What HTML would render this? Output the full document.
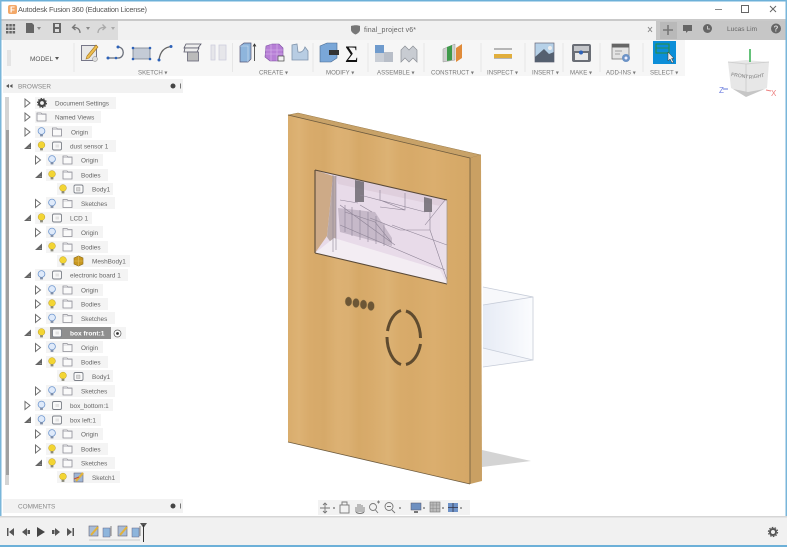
<!DOCTYPE html>
<html><head><meta charset="utf-8"><title>Autodesk Fusion 360</title>
<style>
html,body{margin:0;padding:0;width:787px;height:547px;overflow:hidden;background:#fff}
svg{display:block;font-family:"Liberation Sans",sans-serif;filter:blur(.3px)}
.t{font-size:6.4px;fill:#666}
.l{font-size:6.1px;fill:#7a7a7a}
</style></head><body>
<svg width="787" height="547" viewBox="0 0 787 547" xmlns="http://www.w3.org/2000/svg">
<defs>
<linearGradient id="wood" x1="0" x2="1" y1="0" y2="0">
<stop offset="0" stop-color="#d9ad6d"/><stop offset=".06" stop-color="#ddb274"/><stop offset=".12" stop-color="#d8ab6b"/><stop offset=".2" stop-color="#d6a969"/><stop offset=".27" stop-color="#dcb173"/><stop offset=".33" stop-color="#dbb072"/><stop offset=".39" stop-color="#d6a968"/><stop offset=".45" stop-color="#d8ab6b"/><stop offset=".55" stop-color="#dcb274"/><stop offset=".62" stop-color="#d8ab6a"/><stop offset=".68" stop-color="#d7aa69"/><stop offset=".8" stop-color="#dbae6e"/><stop offset=".9" stop-color="#d7aa69"/><stop offset="1" stop-color="#d5a867"/>
</linearGradient>
<linearGradient id="glass" x1="0" x2="1" y1="0" y2="0"><stop offset="0" stop-color="#e6ebf5"/><stop offset="1" stop-color="#fbfcfe"/></linearGradient>
<symbol id="ar" overflow="visible"><path d="M-2.500-4L2.500 0L-2.500 4Z" fill="#fff" stroke="#6f6f6f" stroke-width="1"/></symbol>
<symbol id="ad" overflow="visible"><path d="M3.500-3.500V3H-3.500Z" fill="#666"/><path d="M1 1.500H3" stroke="#aaa" stroke-width=".6"/></symbol>
<symbol id="by" overflow="visible"><circle cy="-1" r="3.400" fill="#f3d533" stroke="#b89c2a" stroke-width=".5"/><rect x="-1.400" y="2.200" width="2.800" height="2.200" fill="#8a8a7a"/></symbol>
<symbol id="bb" overflow="visible"><circle cy="-1" r="3.400" fill="#dfeafa" stroke="#6f97cf" stroke-width=".8"/><rect x="-1.400" y="2.200" width="2.800" height="2.200" fill="#7f8ea8"/></symbol>
<symbol id="fo" overflow="visible"><path d="M-4.500-4H-.5L.5-3H4.500V4H-4.500Z" fill="#fafafa" stroke="#8c8c94" stroke-width=".8"/><path d="M-4.500-2.500H4.500" stroke="#a8a8b0" stroke-width=".5"/></symbol>
<symbol id="co" overflow="visible"><rect x="-4.500" y="-4" width="9" height="8" rx="1.500" fill="#f8f8f8" stroke="#7c8088" stroke-width=".9"/><rect x="-1.500" y="-1.500" width="3.500" height="3" fill="#e2e2e2"/></symbol>
<symbol id="bd" overflow="visible"><rect x="-4.500" y="-4" width="9" height="8" rx="1.500" fill="#fbfbfb" stroke="#7c8088" stroke-width=".9"/><rect x="-2" y="-1.500" width="3.500" height="3.500" fill="#d6d6d6" stroke="#999" stroke-width=".4"/></symbol>
</defs>

<!-- title bar -->
<rect width="787" height="547" fill="#fff"/>
<rect x="0" y="0" width="787" height="1.500" fill="#6cb0d8"/>
<rect x="8" y="5" width="9" height="9" rx="2" fill="#f3a868"/><text x="10" y="12.500" font-size="8" font-weight="bold" fill="#fff">F</text>
<text x="18" y="12" font-size="7.400" fill="#555" textLength="129">Autodesk Fusion 360 (Education License)</text>
<path d="M715 9.500H722" stroke="#888" stroke-width="1"/>
<rect x="741.500" y="5.500" width="7" height="7" fill="none" stroke="#666" stroke-width="1"/>
<path d="M770 6L776 12M776 6L770 12" stroke="#666" stroke-width="1"/>

<!-- tab row -->
<rect x="0" y="19" width="787" height="2" fill="#c9c9c9"/>
<rect x="0" y="21" width="787" height="19" fill="#f1f1f1"/>
<rect x="0" y="21" width="118" height="19" fill="#dcdcdc"/>
<rect x="656" y="21" width="131" height="19" fill="#c6c6c6"/>
<rect x="660" y="22" width="17" height="17" fill="#b9b9b9"/>
<g fill="#666">
<rect x="6" y="24" width="2.500" height="2.500"/><rect x="9.300" y="24" width="2.500" height="2.500"/><rect x="12.600" y="24" width="2.500" height="2.500"/>
<rect x="6" y="27.500" width="2.500" height="2.500"/><rect x="9.300" y="27.500" width="2.500" height="2.500"/><rect x="12.600" y="27.500" width="2.500" height="2.500"/>
<rect x="6" y="31" width="2.500" height="2.500"/><rect x="9.300" y="31" width="2.500" height="2.500"/><rect x="12.600" y="31" width="2.500" height="2.500"/>
<path d="M26 23H32L34 25V33H26Z"/><path d="M37 27H41L39 30Z" fill="#888"/>
<path d="M53 23H61V33H53Z"/><rect x="55" y="24" width="4" height="3" fill="#ddd"/><rect x="55" y="29" width="4" height="3" fill="#ddd"/>
<path d="M86 27H90L88 30Z" fill="#888"/><path d="M111 27H115L113 30Z" fill="#aaa"/>
</g>
<path d="M80 33C80 29 77 27 73 27.500M75.500 24.500L72.500 27.500L75.500 30" fill="none" stroke="#777" stroke-width="1.300"/>
<path d="M98 33C98 29 101 27 105 27.500M102.500 24.500L105.500 27.500L102.500 30" fill="none" stroke="#aaa" stroke-width="1.300"/>
<path d="M351 26C354 25 358 25 360 26V30C360 32 357 34 355.500 34.500C354 34 351 32 351 30Z" fill="#777"/>
<text x="364" y="32" font-size="7" fill="#666" textLength="52">final_project v6*</text>
<path d="M648 27L652 32M652 27L648 32" stroke="#888" stroke-width="1"/>
<path d="M668 25V35M663 30H673" stroke="#777" stroke-width="1.600"/>
<rect x="683" y="25" width="9" height="6" fill="#666"/><path d="M686 31V33L688 31Z" fill="#666"/>
<circle cx="707.500" cy="28.500" r="4.500" fill="#666"/><path d="M707.500 26V29H710" stroke="#ddd" fill="none" stroke-width=".8"/>
<text x="727" y="31" font-size="6.500" fill="#666" textLength="30">Lucas Lim</text>
<circle cx="776" cy="28.500" r="5" fill="#666"/><text x="776" y="31.500" font-size="8" font-weight="bold" fill="#ddd" text-anchor="middle">?</text>

<!-- toolbar -->
<rect x="3" y="40" width="682" height="36" fill="#f6f6f6"/>
<path d="M8 50V66M10 50V66" stroke="#d2d2d2" stroke-width="1"/>
<path d="M74 43V72M232.500 43V72M313 43V72M368 43V72M424 43V72M481 43V72M525 43V72M563 43V72M600 43V72M643 43V72" stroke="#e6e6e6" stroke-width="1"/>
<text x="30" y="61" font-size="6.500" fill="#555">MODEL</text><path d="M55 57H59L57 60Z" fill="#555"/>
<text x="138" y="74.500" class="l">SKETCH ▾</text>
<text x="259" y="74.500" class="l">CREATE ▾</text>
<text x="326" y="74.500" class="l">MODIFY ▾</text>
<text x="377" y="74.500" class="l">ASSEMBLE ▾</text>
<text x="431" y="74.500" class="l">CONSTRUCT ▾</text>
<text x="487" y="74.500" class="l">INSPECT ▾</text>
<text x="532" y="74.500" class="l">INSERT ▾</text>
<text x="570" y="74.500" class="l">MAKE ▾</text>
<text x="606" y="74.500" class="l">ADD-INS ▾</text>
<text x="650" y="74.500" class="l">SELECT ▾</text>
<!-- sketch -->
<rect x="81.500" y="45.500" width="15" height="15" fill="#e8e8e8" stroke="#778" stroke-width="1"/>
<path d="M87 56L96 45L98 47L89 58L86 59Z" fill="#eebe50" stroke="#a87a20" stroke-width=".6"/>
<circle cx="95" cy="59" r="2.500" fill="#ddd" stroke="#888" stroke-width=".5"/>
<path d="M108 58H118C125 58 125 47 118 47" fill="none" stroke="#6a6f7a" stroke-width="1.300"/>
<g fill="#2e62b8"><circle cx="108" cy="58" r="1.500"/><circle cx="118" cy="47" r="1.500"/><circle cx="116" cy="58" r="1.300"/></g>
<rect x="133" y="48" width="17" height="11" fill="#c4cbd6" stroke="#7a8190" stroke-width=".8"/>
<g fill="#2e62b8"><circle cx="133" cy="48" r="1.300"/><circle cx="150" cy="48" r="1.300"/><circle cx="133" cy="59" r="1.300"/><circle cx="150" cy="59" r="1.300"/></g>
<path d="M159 60C160 52 164 47 172 46.500" fill="none" stroke="#666" stroke-width="1.300"/>
<circle cx="159" cy="60" r="1.500" fill="#2e62b8"/><circle cx="171" cy="46.500" r="1.500" fill="#2e62b8"/>
<path d="M186 44H201L198 48H184Z" fill="#eee" stroke="#556" stroke-width=".8"/><path d="M185 48H199L197 52H184Z" fill="#eee" stroke="#556" stroke-width=".8"/>
<rect x="187.500" y="52" width="11" height="9" fill="#bbb" stroke="#667" stroke-width=".8"/>
<path d="M211 45H215V60H211ZM219 45H226V60H219Z" fill="#e6e6ea" stroke="#ccd" stroke-width=".8"/>
<!-- create -->
<path d="M240 46L244 43H251V59L248 62H240Z" fill="#8eb5dc" stroke="#557" stroke-width=".7"/>
<path d="M240 46H248V62" fill="none" stroke="#cfe0f2" stroke-width=".6"/>
<path d="M254.500 61V44M253 46.500L254.500 44L256 46.500" stroke="#333" fill="none" stroke-width=".8"/>
<path d="M266 46L272 44H279L283 48V58L278 61H270L265 57Z" fill="#b77fd6" stroke="#7a4ea0" stroke-width=".6"/>
<path d="M265 50H283M265 54H283M271 44V61M277 44V61" stroke="#d9b9ec" stroke-width=".6"/>
<rect x="278" y="56" width="6" height="5" fill="#f2f2f2" stroke="#444" stroke-width=".7"/>
<path d="M292 60V45L297 44L298 52C302 53 304 50 305 47L308 51V60Z" fill="#b8cde3" stroke="#7f93ab" stroke-width=".8"/>
<!-- modify -->
<path d="M320 46L327 43H337V58L331 62H320Z" fill="#7aa7d8" stroke="#46688f" stroke-width=".6"/>
<path d="M329 50H339V55H329Z" fill="#333"/>
<text x="345" y="62" font-size="23" font-family="Liberation Serif" fill="#111">Σ</text>
<!-- assemble -->
<rect x="375" y="45" width="9" height="9" fill="#6f9bcd"/><rect x="375" y="53" width="9" height="9" fill="#c9ced6"/><rect x="384" y="52" width="9" height="10" fill="#b8bec8"/>
<path d="M401 62V50L405 46L409 50L413 46L417 50V62L413 58L409 62L405 58Z" fill="#c8ccd2" stroke="#8b8f96" stroke-width=".7"/>
<!-- construct -->
<path d="M443 49L455 44V60L443 62Z" fill="#cfcfcf" stroke="#999" stroke-width=".5"/>
<path d="M447 47L452 45V60L447 61Z" fill="#3f9a4a"/><path d="M456 48L462 44V58L456 62Z" fill="#e08b3a"/>
<!-- inspect -->
<path d="M494 49H512M494 58H512" stroke="#777" stroke-width="1"/><rect x="494" y="54" width="18" height="4" fill="#e1ae3c"/>
<!-- insert -->
<rect x="535" y="43" width="19" height="19" fill="#b6d1e8" stroke="#667" stroke-width=".7"/>
<path d="M535 62V57L544 49L549 54L554 52V62Z" fill="#556070"/><circle cx="550" cy="48" r="2" fill="#eee"/>
<!-- make -->
<rect x="572" y="44" width="19" height="18" rx="2" fill="#6a6e76"/><rect x="574" y="46" width="15" height="5" fill="#c4c6ca"/><rect x="575" y="53" width="13" height="7" fill="#e8e8e8"/><circle cx="581" cy="52.500" r="2" fill="#2e62b8"/>
<!-- addins -->
<rect x="612" y="44" width="17" height="15" fill="#e4e4e4" stroke="#777" stroke-width=".8"/><rect x="612" y="44" width="17" height="3.500" fill="#666"/>
<path d="M615 51H622M615 54H620" stroke="#888" stroke-width=".7"/><circle cx="626" cy="58" r="4" fill="#6c93c6"/><circle cx="626" cy="58" r="1.500" fill="#eef"/>
<!-- select -->
<rect x="653" y="41" width="23" height="23" fill="#0c8ed8"/>
<rect x="656" y="44" width="13" height="9" fill="none" stroke="#2d8f3c" stroke-width="1"/><path d="M656 48H669" stroke="#2d8f3c" stroke-width=".8"/>
<path d="M668 52V61L670 59L672 63L673.500 62L671.500 58.500H674Z" fill="#eee" stroke="#333" stroke-width=".5"/>

<!-- viewcube -->
<path d="M728 62L746 60L769 62L767 88L746 96L731 88Z" fill="#e7e7e7"/>
<path d="M728 62L746 64L769 62" fill="none" stroke="#d0d0d0" stroke-width="1"/>
<path d="M746 64V96" stroke="#cfcfcf" stroke-width="1"/>
<path d="M733 89L746 97L765 89L748 92Z" fill="#c6c6c6"/>
<text x="731" y="76" font-size="5" fill="#777" transform="rotate(8 731 76)">FRONT</text>
<text x="749" y="79" font-size="5" fill="#777" transform="rotate(-8 749 79)">RIGHT</text>
<path d="M750 49V62" stroke="#65c27a" stroke-width="2"/>
<path d="M728 89H723" stroke="#7d8fe0" stroke-width="1.200"/><text x="719" y="93" font-size="8" fill="#6f7fe0">Z</text>
<path d="M766 90L771 91" stroke="#ec8080" stroke-width="1"/><text x="771" y="96" font-size="8" fill="#ec8080">X</text>

<!-- browser -->
<rect x="3" y="79" width="180" height="14" fill="#f2f2f2"/>
<path d="M6 86L9 84V88ZM9.500 86L12.500 84V88Z" fill="#555"/>
<text x="18" y="88.500" class="t" style="fill:#888">BROWSER</text>
<circle cx="173" cy="86" r="2.500" fill="#444"/><rect x="180" y="83.500" width="1" height="5" fill="#777"/>
<rect x="5" y="97" width="4" height="388" fill="#d4d4d4"/><rect x="6" y="130" width="3" height="345" fill="#a0a0a0"/>
<rect x="0" y="0" width="1.500" height="547" fill="#79b6da"/><rect x="785.500" y="0" width="1.500" height="547" fill="#79b6da"/>

<!-- tree pills -->
<g fill="#f4f4f4">
<rect x="35" y="97" width="81" height="12"/><rect x="35" y="111" width="66" height="12"/><rect x="35" y="126" width="57" height="12"/><rect x="35" y="140" width="81" height="12"/>
<rect x="46" y="154" width="57" height="12"/><rect x="46" y="169" width="62" height="12"/><rect x="57" y="183" width="56" height="12"/><rect x="46" y="197" width="69" height="12"/>
<rect x="35" y="212" width="57" height="12"/><rect x="46" y="226" width="57" height="12"/><rect x="46" y="241" width="62" height="12"/><rect x="57" y="255" width="73" height="12"/>
<rect x="35" y="269" width="93" height="12"/><rect x="46" y="284" width="57" height="12"/><rect x="46" y="298" width="62" height="12"/><rect x="46" y="312" width="69" height="12"/>
<rect x="35" y="327" width="91" height="12"/><rect x="46" y="341" width="57" height="12"/><rect x="46" y="356" width="62" height="12"/><rect x="57" y="370" width="56" height="12"/><rect x="46" y="385" width="69" height="12"/>
<rect x="35" y="399" width="78" height="12"/><rect x="35" y="414" width="66" height="12"/><rect x="46" y="428" width="57" height="12"/><rect x="46" y="443" width="62" height="12"/><rect x="46" y="457" width="69" height="12"/><rect x="57" y="471" width="63" height="12"/>
</g>
<rect x="50" y="327" width="61" height="12" fill="#8f8f8f"/>

<!-- tree arrows -->
<use href="#ar" x="27.500" y="103"/><use href="#ar" x="27.500" y="117"/><use href="#ar" x="27.500" y="132"/><use href="#ad" x="27.500" y="146"/>
<use href="#ar" x="38" y="160"/><use href="#ad" x="38.500" y="175"/><use href="#ar" x="38" y="203.500"/>
<use href="#ad" x="27.500" y="218"/><use href="#ar" x="38" y="232.500"/><use href="#ad" x="38.500" y="247"/>
<use href="#ad" x="27.500" y="275"/><use href="#ar" x="38" y="290"/><use href="#ar" x="38" y="304"/><use href="#ar" x="38" y="318.500"/>
<use href="#ad" x="27.500" y="333"/><use href="#ar" x="38" y="347.500"/><use href="#ad" x="38.500" y="362"/><use href="#ar" x="38" y="391"/>
<use href="#ar" x="27.500" y="405.500"/><use href="#ad" x="27.500" y="420"/><use href="#ar" x="38" y="434"/><use href="#ar" x="38" y="449"/><use href="#ad" x="38.500" y="463"/>

<!-- bulbs -->
<use href="#bb" x="41.500" y="132"/><use href="#by" x="41.500" y="146"/><use href="#bb" x="52" y="160"/><use href="#by" x="52" y="175"/><use href="#by" x="63" y="189"/><use href="#bb" x="52" y="203.500"/>
<use href="#by" x="41.500" y="218"/><use href="#bb" x="52" y="232.500"/><use href="#by" x="52" y="247"/><use href="#by" x="63" y="261"/>
<use href="#bb" x="41.500" y="275"/><use href="#bb" x="52" y="290"/><use href="#by" x="52" y="304"/><use href="#bb" x="52" y="318.500"/>
<use href="#by" x="41.500" y="333"/><use href="#bb" x="52" y="347.500"/><use href="#by" x="52" y="362"/><use href="#by" x="63" y="376.500"/><use href="#bb" x="52" y="391"/>
<use href="#bb" x="41.500" y="405.500"/><use href="#bb" x="41.500" y="420"/><use href="#bb" x="52" y="434"/><use href="#by" x="52" y="449"/><use href="#by" x="52" y="463"/><use href="#by" x="63" y="477.500"/>

<!-- tree icons -->
<circle cx="42" cy="103" r="3" fill="none" stroke="#444" stroke-width="2.200"/><circle cx="42" cy="103" r="4.500" fill="none" stroke="#444" stroke-width="1" stroke-dasharray="1.500 1.300"/>
<use href="#fo" x="41.500" y="117"/><use href="#fo" x="57" y="132"/><use href="#co" x="57" y="146"/>
<use href="#fo" x="67.500" y="160"/><use href="#fo" x="67.500" y="175"/><use href="#bd" x="78.500" y="189"/><use href="#fo" x="67.500" y="203.500"/>
<use href="#co" x="57" y="218"/><use href="#fo" x="67.500" y="232.500"/><use href="#fo" x="67.500" y="247"/>
<path d="M74 258L78.500 256L83 258V264L78.500 266L74 264Z" fill="#c9981f" stroke="#8a6a18" stroke-width=".6"/><path d="M74 261H83M78.500 256V266" stroke="#e3bd5a" stroke-width=".6"/>
<use href="#co" x="57" y="275"/><use href="#fo" x="67.500" y="290"/><use href="#fo" x="67.500" y="304"/><use href="#fo" x="67.500" y="318.500"/>
<use href="#co" x="57" y="333"/><use href="#fo" x="67.500" y="347.500"/><use href="#fo" x="67.500" y="362"/><use href="#bd" x="78.500" y="376.500"/><use href="#fo" x="67.500" y="391"/>
<use href="#co" x="57" y="405.500"/><use href="#co" x="57" y="420"/><use href="#fo" x="67.500" y="434"/><use href="#fo" x="67.500" y="449"/><use href="#fo" x="67.500" y="463"/>
<rect x="74" y="473" width="9" height="9" fill="#9fb6d6" stroke="#667" stroke-width=".6"/><path d="M76 481L83 473" stroke="#e2b23a" stroke-width="2.200"/><path d="M74 479L79 477" stroke="#c0503a" stroke-width="1"/>

<!-- tree text -->
<text x="55" y="105.500" class="t">Document Settings</text>
<text x="55" y="119.500" class="t">Named Views</text>
<text x="71" y="134.500" class="t">Origin</text>
<text x="70" y="148.500" class="t">dust sensor 1</text>
<text x="81" y="162.500" class="t">Origin</text>
<text x="81" y="177.500" class="t">Bodies</text>
<text x="92" y="191.500" class="t">Body1</text>
<text x="81" y="206" class="t">Sketches</text>
<text x="70" y="220.500" class="t">LCD 1</text>
<text x="81" y="235" class="t">Origin</text>
<text x="81" y="249.500" class="t">Bodies</text>
<text x="92" y="263.500" class="t">MeshBody1</text>
<text x="70" y="277.500" class="t">electronic board 1</text>
<text x="81" y="292.500" class="t">Origin</text>
<text x="81" y="306.500" class="t">Bodies</text>
<text x="81" y="321" class="t">Sketches</text>
<text x="70" y="335.500" font-size="6.600" font-weight="bold" fill="#fff">box front:1</text>
<text x="81" y="350" class="t">Origin</text>
<text x="81" y="364.500" class="t">Bodies</text>
<text x="92" y="379" class="t">Body1</text>
<text x="81" y="393.500" class="t">Sketches</text>
<text x="70" y="408" class="t">box_bottom:1</text>
<text x="70" y="422.500" class="t">box left:1</text>
<text x="81" y="436.500" class="t">Origin</text>
<text x="81" y="451.500" class="t">Bodies</text>
<text x="81" y="465.500" class="t">Sketches</text>
<text x="92" y="480" class="t">Sketch1</text>
<circle cx="117.500" cy="333.500" r="3.500" fill="#fff" stroke="#555" stroke-width=".7"/><circle cx="117.500" cy="333.500" r="1.400" fill="#333"/>

<!-- 3D: translucent box -->
<path d="M483 287L533 297V360L483 367Z" fill="url(#glass)"/>
<path d="M483 287L533 297L483 305Z" fill="#f7f8fb"/><path d="M483 348L533 360L483 367Z" fill="#f3f5fa"/>
<path d="M483 287L533 297V360L483 348M483 305L533 297M533 360L483 367" fill="none" stroke="#c6ccd8" stroke-width=".8"/>
<!-- shadow -->
<path d="M482 450L531 461L482 467Z" fill="#d4d4d4"/>
<!-- board -->
<path d="M288 115L298 113L481 155L470 158Z" fill="#c8a268" stroke="#9a7a48" stroke-width=".5"/>
<path d="M470 158L481 155L482 481L470 484Z" fill="#c9a063"/>
<path d="M288 115L470 158V484L288 442Z" fill="url(#wood)"/>
<path d="M288 115L470 158M470 158V484M288 442L470 484" fill="none" stroke="#6f5c3f" stroke-width=".8"/>
<!-- window -->
<path d="M315 170L447 200V284L315 253Z" fill="#e8dbe9"/>
<path d="M315 170L333 176L327 236L315 253Z" fill="#cdaa87"/>
<path d="M333 176L336 176V250L327 237Z" fill="#b9a9a8"/>
<path d="M336 176L447 200L440 206L338 184Z" fill="#dfcfdd"/>
<path d="M315 253L334 238L447 272V284Z" fill="#f3edf3"/>
<path d="M440 206L447 200V284L440 270Z" fill="#eadfe9"/>
<path d="M338 208L375 212L392 238L392 246L340 232Z" fill="#c6b9c9"/>
<path d="M355 180L364 182V202H355Z" fill="#6f6a72" opacity=".85"/><path d="M424 197L432 199V212H424Z" fill="#6f6a72" opacity=".85"/>
<g fill="none" stroke="#8e8496" stroke-width=".6">
<path d="M333 175V252M336 176V250M340 205L395 245M345 212L375 222L392 243M360 205L372 212M405 193V210L380 207M380 190V200L405 210M430 212V230H400L370 218M340 225L445 270M392 225L447 245M425 225L445 200M360 195L425 212M340 200L358 203M430 230L447 280"/>
<path d="M345 205V232M352 207V236M360 210V240M368 212V242M376 216V244M384 224V246"/>
</g>
<path d="M315 170L447 200M315 253L447 284M315 170V253" fill="none" stroke="#5a4a38" stroke-width="1.100"/>
<path d="M447 200V284" stroke="#a89a8a" stroke-width=".8"/>
<!-- holes -->
<g fill="#6c5636" stroke="#a88a58" stroke-width=".4">
<ellipse cx="348.500" cy="301.500" rx="3.400" ry="4.600"/><ellipse cx="356" cy="303" rx="3.400" ry="4.600"/><ellipse cx="363.500" cy="304.500" rx="3.400" ry="4.600"/><ellipse cx="371" cy="306" rx="3.400" ry="4.600"/>
</g>
<g fill="none" stroke="#5f4b2f" stroke-width="3">
<path d="M387.500 331A17.500 28.500 0 0 1 401 310.500"/>
<path d="M406 311A17.500 28.500 0 0 1 420.500 338"/>
<path d="M387 337A17.500 28.500 0 0 0 401 364.500"/>
<path d="M406 364.500A17.500 28.500 0 0 0 420.500 344"/>
</g>

<!-- nav bar -->
<rect x="318" y="500" width="152" height="15" fill="#f2f2f2"/>
<g fill="none" stroke="#777" stroke-width=".9">
<path d="M325 503V513M320 508H330M323 505L325 503L327 505M323 511L325 513L327 511"/>
<rect x="340" y="505" width="9" height="8"/><path d="M342 505V502H347V505"/>
<path d="M356 512V507M358 512V504M360 512V504M362 512V505M364 512V507M356 512C358 514 362 514 364 512"/>
<circle cx="373" cy="507" r="3.500"/><path d="M375.500 510L378 513M377 502H380M378.500 500.500V503.500"/>
<circle cx="389" cy="506.500" r="4"/><path d="M392 510L395 513M387 506.500H391"/>
</g>
<rect x="411" y="503" width="10" height="7" fill="#6d8fc0" stroke="#556" stroke-width=".5"/><rect x="414" y="511" width="4" height="2" fill="#777"/>
<rect x="430" y="502" width="10" height="10" fill="#bbb" stroke="#777" stroke-width=".6"/><path d="M433 502V512M436.500 502V512M430 505H440M430 508.500H440" stroke="#888" stroke-width=".5"/>
<rect x="448" y="503" width="10" height="9" fill="#6f93c8"/><path d="M453 503V512M448 507.500H458" stroke="#334" stroke-width=".8"/>
<g fill="#666"><circle cx="334" cy="508" r=".9"/><circle cx="400" cy="508" r=".9"/><circle cx="424" cy="508" r=".9"/><circle cx="443" cy="508" r=".9"/><circle cx="461" cy="508" r=".9"/></g>

<!-- comments -->
<rect x="3" y="499" width="180" height="14" fill="#f2f2f2"/>
<text x="18" y="508.500" class="t" style="fill:#888">COMMENTS</text>
<circle cx="173" cy="506" r="2.500" fill="#444"/><rect x="180" y="503.500" width="1" height="5" fill="#777"/>

<!-- timeline -->
<rect x="0" y="516" width="787" height="29" fill="#f1f1f1"/><rect x="0" y="516" width="787" height="1.500" fill="#d6d6d6"/>
<rect x="0" y="545" width="787" height="2" fill="#6cb0d8"/>
<g fill="#555">
<path d="M7 528H8.500V536H7ZM14 528V536L9 532Z"/>
<path d="M22 532L27 528V536ZM27.500 530H30V534H27.500Z"/>
<path d="M37 527L45 532L37 537Z" fill="#444"/>
<path d="M52 530H54.500V534H52ZM55 528L60 532L55 536Z"/>
<path d="M67 528L72 532L67 536ZM72.500 528H74V536H72.500Z"/>
</g>
<rect x="89" y="526" width="9" height="10" fill="#a9bcd6" stroke="#667" stroke-width=".6"/><path d="M91 535L98 527" stroke="#e2b23a" stroke-width="2"/>
<rect x="103" y="528" width="7" height="9" fill="#8eb5dc" stroke="#668" stroke-width=".5"/><path d="M111 536V526" stroke="#666" stroke-width=".8"/>
<rect x="118" y="526" width="9" height="10" fill="#a9bcd6" stroke="#667" stroke-width=".6"/><path d="M120 535L127 527" stroke="#e2b23a" stroke-width="2"/>
<rect x="132" y="528" width="7" height="9" fill="#8eb5dc" stroke="#668" stroke-width=".5"/><path d="M140 536V526" stroke="#666" stroke-width=".8"/>
<path d="M89 540H140" stroke="#ccc" stroke-width="1"/>
<path d="M140 523H147L143.500 528Z" fill="#555"/><path d="M143.500 525V542" stroke="#333" stroke-width="1"/>
<circle cx="773" cy="532" r="3" fill="none" stroke="#555" stroke-width="2"/><circle cx="773" cy="532" r="4.600" fill="none" stroke="#555" stroke-width="1.100" stroke-dasharray="1.600 1.300"/>
</svg>
</body></html>
